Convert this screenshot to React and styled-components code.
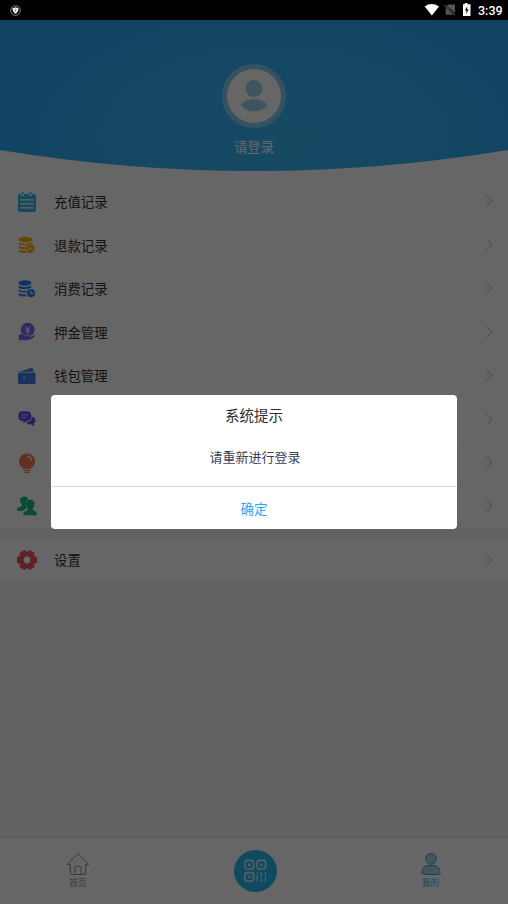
import React from "react";
import styled, { createGlobalStyle } from "styled-components";

const GlobalStyle = createGlobalStyle`
  * {
    box-sizing: border-box;
  }

  body {
    margin: 0;
    background: #f3f3f3;
    font-family: "Noto Sans CJK SC", sans-serif;
  }
`;

// Styled Components
const Page = styled.div`
  position: relative;
  display: flex;
  flex-direction: column;
  height: 904px;
  overflow: hidden;
  background: #f5f5f5;
`;

const StatusBar = styled.div`
  display: flex;
  align-items: center;
  flex: 0 0 20px;
  padding: 0 6px 0 10px;
  background: #000;
  color: #fff;
`;

const StatusIcons = styled.div`
  display: flex;
  align-items: center;
  margin-left: auto;
`;

const Clock = styled.span`
  width: 24px;
  margin-left: 6px;
  padding-top: 1px;
  font: 500 12.5px/19px Roboto, sans-serif;
  white-space: nowrap;
`;

const HeaderWrap = styled.header`
  flex: 0 0 160px;
  background: #fff;
`;

const Header = styled.div`
  display: flex;
  flex-direction: column;
  align-items: center;
  height: 151px;
  padding-top: 44px;
  background: radial-gradient(ellipse 300px 160px at 54% 78%, #38b9f8 0%, #35b5f8 40%, #28a6f8 100%);
  clip-path: path("M0 0H508V130Q254 172 0 130Z");
`;

const Avatar = styled.div`
  display: flex;
  align-items: center;
  justify-content: center;
  width: 64px;
  height: 64px;
  border: 5px solid #86cdf2;
  border-radius: 50%;
  background: #fff;
`;

const LoginText = styled.div`
  margin-top: 8px;
  color: #fff;
  font-size: 13.4px;
  line-height: 20px;
`;

const Menu = styled.div`
  background: #fff;
  margin-bottom: ${({ $gap }) => $gap || 0}px;
`;

const Row = styled.div`
  display: flex;
  align-items: center;
  height: ${({ $single }) => ($single ? 43 : 43.5)}px;
  padding-left: 16px;
`;

const IconBox = styled.div`
  display: flex;
  flex: 0 0 22px;
  margin-right: 16px;
`;

const RowBody = styled.div`
  display: flex;
  flex: 1;
  align-items: center;
  justify-content: space-between;
  height: 100%;
  padding-right: 14px;
  border-bottom: ${({ $last }) => ($last ? "none" : "1px solid #f3f3f3")};
  color: #333;
  font-size: 13.4px;
`;

const RowLabel = styled.span`
  line-height: 20px;
  padding-bottom: ${({ $last }) => ($last ? 1 : 0)}px;
`;

const TabBar = styled.nav`
  display: grid;
  grid-template-columns: 156px 1fr 155px;
  height: 67px;
  margin-top: auto;
  border-top: 1px solid #dcdcdc;
  background: #fff;
`;

const Tab = styled.div`
  display: flex;
  flex-direction: column;
  align-items: center;
  padding-top: ${({ $center }) => ($center ? 12 : 14)}px;
  padding-left: ${({ $center }) => ($center ? 1 : 0)}px;
  color: ${({ $active }) => ($active ? "#40b4e4" : "#8c8c8c")};
  font-size: 8.7px;
  line-height: 13px;
`;

const ScanButton = styled.div`
  display: flex;
  align-items: center;
  justify-content: center;
  width: 43px;
  height: 42px;
  border-radius: 50%;
  background: #2ab8f0;
`;

const Mask = styled.div`
  position: absolute;
  inset: 20px 0 0;
  display: flex;
  align-items: flex-start;
  justify-content: center;
  padding-top: 375px;
  background: rgba(0, 0, 0, 0.6);
`;

const Dialog = styled.div`
  width: 406px;
  height: 134px;
  border-radius: 4px;
  background: #fff;
  text-align: center;
`;

const DialogTitle = styled.div`
  padding-top: 10px;
  color: #2e2e2e;
  font-size: 14.5px;
  line-height: 20px;
`;

const DialogText = styled.div`
  height: 61px;
  padding: 22px 0 0 2px;
  color: #3a3f5c;
  font-size: 13px;
  line-height: 20px;
`;

const DialogButton = styled.div`
  height: 43px;
  border-top: 1px solid #d8d8d8;
  color: #2ea6e8;
  font-size: 13.4px;
  line-height: 42px;
`;

const icons = {
  recharge: (
    <>
      <path fill="#36b6e6" d="M3 3h2v2h3V3h5v2h3V3h2q2 0 2 2v14q0 2-2 2H4q-2 0-2-2V5q0-2 1-2Z" />
      <path stroke="#36b6e6" strokeWidth="1.6" d="M6.5 1v3M14.5 1v3" />
      <path stroke="#fff" strokeWidth="1.3" d="M4.5 8.8h13M4.5 12.8h13M4.5 16.8h13" />
    </>
  ),
  refund: (
    <>
      <ellipse cx="9.5" cy="5.6" rx="6.8" ry="2.7" fill="#ffa800" />
      <path fill="#ffa800" d="M3 8.2q6 3 13.3 0v1.6q-3 .2-4.6 1.6-5 .6-8.7-1ZM3 12q3 1.4 7 1.2-.6 1-.5 2Q6 15.4 3 14ZM3 15.6q3 1.4 6.7 1.3.5 1.3 1.3 2Q5 19.3 3 17.8Z" />
      <circle cx="14.5" cy="14.8" r="4.2" fill="#ffa800" />
      <path fill="none" stroke="#fff" strokeWidth=".9" d="M16.8 14.8h-4.3m1.7-1.7-1.7 1.7 1.7 1.7" />
    </>
  ),
  spend: (
    <>
      <ellipse cx="9" cy="5" rx="6.4" ry="2.7" fill="#2a80f6" />
      <path fill="#2a80f6" d="M2.7 7.6q6.3 3 12.6 0v2q-6 3-12.6.4ZM2.7 11.4q4 2 8.3 1.4l-1 1.8q-4 .3-7.3-1ZM2.7 15.2q3 1.4 7 1.1l.7 2Q5 18.7 2.7 17.2Z" />
      <circle cx="15" cy="15.2" r="4.1" fill="#2a80f6" />
      <path fill="none" stroke="#fff" d="M15 12.7v2.8h2.3" />
    </>
  ),
  deposit: (
    <>
      <circle cx="11.7" cy="8.8" r="7" fill="#7669f0" />
      <path fill="none" stroke="#fff" strokeWidth=".9" d="m9.3 5.2 2.4 3 2.4-3M11.7 8.2v4.4M9.5 8.5h4.4M9.5 10.5h4.4" />
      <path fill="#7669f0" stroke="#fff" strokeWidth=".6" d="M3 13.3q4-1.6 7 1h3q1.5.2 1 1.5l4-2q1.7-.2 1 1.5-4 4.4-9 4.4-4-.7-7-.6Z" />
      <path fill="#7669f0" d="M2.8 13.7h2v5.6h-2z" />
    </>
  ),
  wallet: (
    <>
      <path fill="#437ae8" d="m3 7 12-4q1.3-.4 1.7.7l1 3.3ZM3.8 7.4h14q1.8 0 1.8 1.6v8.6q0 1.4-1.8 1.4h-14q-1.8 0-1.8-1.4V9q0-1.6 1.8-1.6Z" />
      <path stroke="#fff" strokeWidth=".5" d="M4 7.3h13.6" />
      <path stroke="#e6efff" strokeWidth="1" d="M8 11v3.6" />
    </>
  ),
  message: (
    <>
      <path fill="#5b55e8" d="M15.8 8.4q3.8 1.1 3.7 4.3-.2 2-1.8 3l.4 2.7-3-1.8q-4 .2-5-2.5 5.8-.2 5.7-5.7Z" />
      <path fill="#5b55e8" d="M6.7 3.2h4q4.7 0 4.7 4.8 0 4.7-4.7 5.1L7.4 15.2V13q-5.2 0-5.2-5Q2.2 3.2 6.7 3.2Z" />
      <path stroke="#d9d7ff" strokeWidth=".8" d="M5 6.8h7.5M5 9.3h5" />
    </>
  ),
  idea: (
    <>
      <path fill="#f27a60" d="M11 1.5a7.9 7.9 0 0 1 4.6 14.3l-1.6 1.1H8l-1.600-1.1A7.9 7.9 0 0 1 11 1.5Z" />
      <path fill="none" stroke="#fff" strokeWidth="1.2" d="M11 4.2q4.3.3 4.500 4.500" />
      <path stroke="#f27a60" strokeWidth="1.2" d="M7.3 18.3h7.4M8.5 20.3h5" />
    </>
  ),
  friends: (
    <>
      <path fill="#1bbd80" d="M8 1.4q4-.2 4 3.4-3 2-2.3 6 .3 1.7 1 2.6-3 1-4 2.6H2q-1.4 0-1-1.8.2-1.7 4-2.9 1.5-.6.4-2.2Q1.7 2.5 8 1.4Z" />
      <path fill="#1bbd80" d="M14.2 4.7q5 .3 4.2 5-.3 2.500-1.700 3.800-.7 1.700 1.300 2.200 3 .8 3 3.300 0 1.300-1.400 1.300H8.500q-1.400 0-1.300-1.500.2-2.200 3.600-3.100 1.500-.5.8-2.200-1.400-1.300-1.600-3.800-.4-4.700 4.200-5Z" />
    </>
  ),
  settings: (
    <>
      <g fill="#ee575b">
        <circle cx="11" cy="11" r="8.2" />
        <rect x="1" y="7.3" width="20" height="7.4" rx="2.2" />
        <rect x="1" y="7.3" width="20" height="7.4" rx="2.2" transform="rotate(60 11 11)" />
        <rect x="1" y="7.3" width="20" height="7.4" rx="2.2" transform="rotate(120 11 11)" />
      </g>
      <circle cx="11" cy="11" r="3.4" fill="#fff" />
    </>
  ),
};

const menuItems = [
  { icon: "recharge", label: "充值记录" },
  { icon: "refund", label: "退款记录" },
  { icon: "spend", label: "消费记录" },
  { icon: "deposit", label: "押金管理" },
  { icon: "wallet", label: "钱包管理" },
  { icon: "message", label: "我的消息" },
  { icon: "idea", label: "使用指南" },
  { icon: "friends", label: "邀请好友" },
];

const MenuRow = ({ item, last, single }) => (
  <Row $single={single}>
    <IconBox>
      <svg width="22" height="22" viewBox="0 0 22 22">
        {icons[item.icon]}
      </svg>
    </IconBox>
    <RowBody $last={last}>
      <RowLabel $last={last}>{item.label}</RowLabel>
      <svg width="9" height="14" viewBox="0 0 9 14" fill="none" stroke="#cdcdcd" strokeWidth="1.1">
        <path d="m1.5 1.5 5.5 5.5-5.5 5.5" />
      </svg>
    </RowBody>
  </Row>
);

const App = () => (
  <>
    <GlobalStyle />
    <Page>
      <StatusBar>
        <svg width="11" height="11" viewBox="0 0 11 11">
          <circle cx="5.5" cy="5.5" r="4.8" fill="none" stroke="#aaa" strokeWidth=".8" />
          <path fill="#fff" d="m5.5 2.3 3 1q0 4-3 5.4-3-1.4-3-5.4Z" />
          <path fill="none" stroke="#000" strokeWidth=".7" d="m5 3.6 1 1-1 1 .8 1" />
        </svg>
        <StatusIcons>
          <svg width="48" height="14" viewBox="0 0 48 14">
            <path fill="#fff" d="M.7 3.5Q7.7-1.4 15 3.5L7.9 12.4Z" />
            <path fill="#555" d="M24.5 1.5H31v8.6L22.7 3ZM21.7 4.3 29 11.8h-7.3Z" />
            <path stroke="#777" d="m20.5 2 10.3 10.3" />
            <path fill="#fff" d="M39 1.2h1.8V0h2.6v1.2h3.1V13H39Z" />
            <path fill="#000" d="M43.3 3.2 40.9 7.5h1.7l-.5 3.5 2.7-4.600h-1.700Z" />
          </svg>
          <Clock>3:39</Clock>
        </StatusIcons>
      </StatusBar>

      <HeaderWrap>
        <Header>
          <Avatar>
            <svg width="54" height="54" viewBox="0 0 54 54" fill="#9bd2ec">
              <circle cx="27" cy="19.5" r="8.5" />
              <path d="M13.5 36Q19 30 27 30t13.5 6Q35 42.5 27 42.5T13.5 36Z" />
            </svg>
          </Avatar>
          <LoginText>请登录</LoginText>
        </Header>
      </HeaderWrap>

      <Menu $gap={10}>
        {menuItems.map((item, i) => (
          <MenuRow key={item.icon} item={item} last={i === menuItems.length - 1} />
        ))}
      </Menu>
      <Menu>
        <MenuRow item={{ icon: "settings", label: "设置" }} last single />
      </Menu>

      <TabBar>
        <Tab>
          <svg width="24" height="24" viewBox="0 0 24 24" fill="none" stroke="#8c8c8c" strokeWidth="1">
            <path strokeLinejoin="round" d="M12 1.3 1.3 12.5h3v8.2q0 1.8 1.8 1.8h11.8q1.8 0 1.8-1.8v-8.2h3Z" />
            <path d="M9 22.5v-7q0-1.2 1.2-1.2h3.6q1.2 0 1.2 1.2v7" />
          </svg>
          首页
        </Tab>
        <Tab $center>
          <ScanButton>
            <svg width="23" height="24" viewBox="0 0 23 24" fill="none" stroke="#d4ecf5">
              <g strokeWidth="1.7">
                <rect x="1" y="1.4" width="8.6" height="8.6" rx="2.4" />
                <rect x="13" y="1.4" width="8.6" height="8.6" rx="2.4" />
                <rect x="1" y="13.6" width="8.6" height="8.6" rx="2.4" />
              </g>
              <path strokeWidth="2.4" d="M4.1 5.7h2.4M16.1 5.7h2.4M4.1 17.9h2.4" />
              <path strokeWidth="1.3" d="M13.2 13v2m0 1.5V23M17.3 13v5m0 1.5V23M21.4 13v2.5m0 1.5v6" />
            </svg>
          </ScanButton>
        </Tab>
        <Tab $active>
          <svg width="24" height="24" viewBox="0 0 24 24" fill="#a9d8eb" stroke="#40a9d4" strokeWidth="1">
            <circle cx="12" cy="6.8" r="5.4" />
            <path d="M2.8 20.5Q3.5 13.5 9 13.5h6q5.5 0 6.2 7 0 2-2 2H4.800q-2 0-2-2Z" />
          </svg>
          我的
        </Tab>
      </TabBar>

      <Mask>
        <Dialog>
          <DialogTitle>系统提示</DialogTitle>
          <DialogText>请重新进行登录</DialogText>
          <DialogButton>确定</DialogButton>
        </Dialog>
      </Mask>
    </Page>
  </>
);

export default App;
